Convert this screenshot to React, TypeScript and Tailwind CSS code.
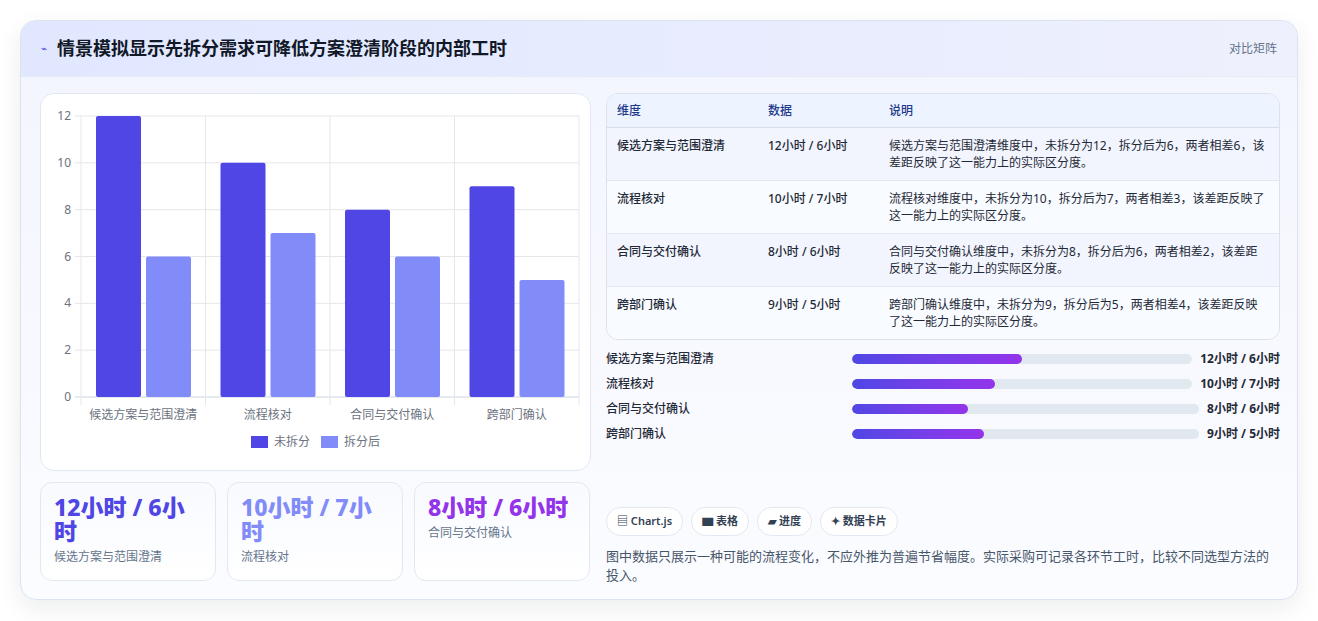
import React from "react";

const cats = ["候选方案与范围澄清", "流程核对", "合同与交付确认", "跨部门确认"];
const before = [12, 10, 8, 9];
const after = [6, 7, 6, 5];
const rows = [
  ["候选方案与范围澄清", "12小时 / 6小时", "候选方案与范围澄清维度中，未拆分为12，拆分后为6，两者相差6，该差距反映了这一能力上的实际区分度。"],
  ["流程核对", "10小时 / 7小时", "流程核对维度中，未拆分为10，拆分后为7，两者相差3，该差距反映了这一能力上的实际区分度。"],
  ["合同与交付确认", "8小时 / 6小时", "合同与交付确认维度中，未拆分为8，拆分后为6，两者相差2，该差距反映了这一能力上的实际区分度。"],
  ["跨部门确认", "9小时 / 5小时", "跨部门确认维度中，未拆分为9，拆分后为5，两者相差4，该差距反映了这一能力上的实际区分度。"],
];
const pct = [50, 42, 33.5, 38];

function Chart() {
  const L = 40, R = 538, Y0 = 303, Y12 = 22;
  const u = (Y0 - Y12) / 12;
  const cw = (R - L) / 4;
  return (
    <svg width="550" height="377" className="block">
      {[0, 2, 4, 6, 8, 10, 12].map((v) => {
        const y = Y0 - v * u;
        return (
          <g key={v}>
            <line x1={L - 6} x2={R} y1={y} y2={y} stroke={v === 0 ? "#cbd5e1" : "#e5e7eb"} />
            <text x={L - 10} y={y + 4} textAnchor="end" fontSize="12" fill="#6b7280">{v}</text>
          </g>
        );
      })}
      {[0, 1, 2, 3, 4].map((i) => (
        <line key={i} x1={L + i * cw} x2={L + i * cw} y1={Y12} y2={Y0 + 8} stroke="#e5e7eb" />
      ))}
      {cats.map((c, i) => {
        const x = L + i * cw;
        return (
          <g key={c}>
            <rect x={x + 15} y={Y0 - before[i] * u} width={45} height={before[i] * u} rx={2} fill="#4f46e5" />
            <rect x={x + 65} y={Y0 - after[i] * u} width={45} height={after[i] * u} rx={2} fill="#818cf8" />
            <text x={x + cw / 2} y={325} textAnchor="middle" fontSize="12" fill="#6b7280">{c}</text>
          </g>
        );
      })}
      <rect x={210} y={342} width={17} height={12} fill="#4f46e5" />
      <text x={233} y={352} fontSize="12" fill="#6b7280">未拆分</text>
      <rect x={280} y={342} width={17} height={12} fill="#818cf8" />
      <text x={303} y={352} fontSize="12" fill="#6b7280">拆分后</text>
    </svg>
  );
}

export default function App() {
  return (
    <div className="w-[1318px] h-[621px] bg-white pt-[20px] pl-[20px]" style={{ fontFamily: '"Noto Sans", "Noto Sans CJK SC", sans-serif' }}>
      <div className="w-[1278px] h-[580px] rounded-[16px] border border-[#dbe2f0] bg-gradient-to-b from-[#f3f5fe] to-[#fbfcff] shadow-[0_8px_24px_rgba(15,23,42,0.08)] overflow-hidden">
        <div className="h-[56px] flex items-center justify-between pl-[20px] pr-[20px] bg-gradient-to-r from-[#e0e7ff] to-[#eef0fd] border-b border-[#e5e9f5]">
          <div className="flex items-center gap-[10px]">
            <span className="text-[#4f46e5] text-[10px]">⌁</span>
            <span className="text-[18px] font-bold text-[#111827]">情景模拟显示先拆分需求可降低方案澄清阶段的内部工时</span>
          </div>
          <span className="text-[12px] text-[#64748b]">对比矩阵</span>
        </div>
        <div className="flex gap-[15px] pl-[19px] pt-[16px]">
          <div className="w-[551px] flex flex-col gap-[11px]">
            <div className="h-[378px] rounded-[14px] border border-[#e2e8f0] bg-white overflow-hidden">
              <Chart />
            </div>
            <div className="flex gap-[11px]">
              {[
                ["12小时 / 6小时", "text-[#4f46e5]", "候选方案与范围澄清"],
                ["10小时 / 7小时", "text-[#818cf8]", "流程核对"],
                ["8小时 / 6小时", "text-[#9333ea]", "合同与交付确认"],
              ].map(([v, c, l]) => (
                <div key={l} className="w-[176px] h-[99px] rounded-[12px] border border-[#e2e8f0] bg-gradient-to-b from-[#f8faff] to-white px-[13px] pt-[12px]">
                  <div className={`text-[23px] font-extrabold leading-[24px] ${c}`}>{v}</div>
                  <div className="text-[12px] text-[#64748b] mt-[5px]">{l}</div>
                </div>
              ))}
            </div>
          </div>
          <div className="w-[674px] flex flex-col">
            <div className="rounded-[12px] border border-[#dbe2ee] overflow-hidden bg-[#f8faff]">
              <div className="flex h-[34px] items-center bg-[#eef4ff] border-b border-[#d6deec] text-[12px] text-[#1e3a8a] font-medium">
                <div className="w-[161px] pl-[10px]">维度</div>
                <div className="w-[121px]">数据</div>
                <div className="flex-1">说明</div>
              </div>
              {rows.map((r, i) => (
                <div key={i} className={`flex py-[9px] text-[12px] text-[#1f2937] leading-[17px] ${i < 3 ? "border-b border-[#e2e8f0]" : ""} ${i % 2 ? "bg-[#f8fbff]" : "bg-[#f2f5fd]"}`}>
                  <div className="w-[161px] pl-[10px] font-medium">{r[0]}</div>
                  <div className="w-[121px] font-medium">{r[1]}</div>
                  <div className="flex-1 pr-[10px]">{r[2]}</div>
                </div>
              ))}
            </div>
            <div className="mt-[10px] flex flex-col gap-[7px]">
              {cats.map((c, i) => (
                <div key={c} className="flex items-center h-[18px]">
                  <div className="w-[246px] text-[12px] text-[#1f2937] font-medium">{c}</div>
                  <div className="flex-1 h-[10px] rounded-full bg-[#e2e8f0] overflow-hidden">
                    <div className="h-full rounded-full bg-gradient-to-r from-[#4f46e5] to-[#9333ea]" style={{ width: pct[i] + "%" }} />
                  </div>
                  <div className="ml-[8px] text-[12px] font-bold text-[#1f2937] whitespace-nowrap">{rows[i][1]}</div>
                </div>
              ))}
            </div>
            <div className="mt-[64px] flex gap-[8px]">
              {["▤ Chart.js", "▆ 表格", "▰ 进度", "✦ 数据卡片"].map((t) => (
                <span key={t} className="h-[29px] px-[10px] flex items-center rounded-full border border-[#e2e8f0] bg-white text-[11px] font-semibold text-[#334155]">{t}</span>
              ))}
            </div>
            <p className="mt-[11px] text-[13px] leading-[19px] text-[#475569]">图中数据只展示一种可能的流程变化，不应外推为普遍节省幅度。实际采购可记录各环节工时，比较不同选型方法的投入。</p>
          </div>
        </div>
      </div>
    </div>
  );
}
